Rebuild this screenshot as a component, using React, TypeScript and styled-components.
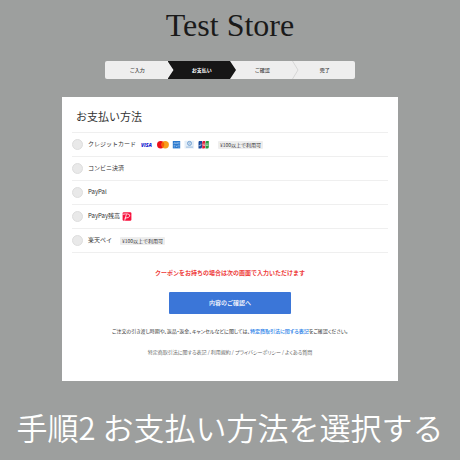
import React, { useState } from "react";
import styled, { createGlobalStyle, css } from "styled-components";

const GlobalStyle = createGlobalStyle`
  *, *::before, *::after { box-sizing: border-box; }
  body {
    margin: 0;
    background: #9d9f9e;
    color: #333;
    font-family: "Noto Sans CJK JP", "Noto Sans", sans-serif;
  }
`;

const Page = styled.div`
  display: flex;
  flex-direction: column;
  min-height: 100vh;
`;

const StoreName = styled.h1`
  margin: 5px 0 0;
  font: 400 32px/40px "Liberation Serif", serif;
  text-align: center;
  color: #1a1a1a;
`;

const Steps = styled.ol`
  display: grid;
  grid-template-columns: repeat(4, 1fr);
  margin: 16px 105px 0;
  padding: 0;
  list-style: none;
  border-radius: 2px;
  background: #eee;
  overflow: hidden;
`;

const Step = styled.li<{ $active?: boolean }>`
  display: flex;
  align-items: center;
  justify-content: center;
  position: relative;
  height: 18px;
  padding-bottom: 1px;
  padding-left: 2px;
  font-size: 5px;
  font-weight: 500;
  color: #444;
  ${(p) =>
    p.$active &&
    css`
      z-index: 1;
      margin-right: -6px;
      padding-left: 0;
      background: #161616;
      color: #fff;
      font-weight: 700;
      clip-path: polygon(0 0, calc(100% - 6px) 0, 100% 50%, calc(100% - 6px) 100%, 0 100%, 6px 50%);
    `}
`;

const Chevron = styled.svg`
  position: absolute;
  top: 0;
  right: -6px;
`;

const Card = styled.main`
  margin: 18px 62px 0;
  padding: 10px 10px 24px;
  background: #fff;
`;

const Heading = styled.h2`
  margin: 0 0 7px;
  padding-left: 4px;
  font-size: 11px;
  line-height: 18px;
  font-weight: 400;
`;

const Methods = styled.ul`
  margin: 0;
  padding: 0;
  list-style: none;
  border-top: 1px solid #efefef;
`;

const Method = styled.li`
  display: flex;
  align-items: center;
  height: 24px;
  border-bottom: 1px solid #efefef;
`;

const MethodLabel = styled.label`
  display: flex;
  align-items: center;
  font-size: 6px;
  line-height: 10px;
  cursor: pointer;
`;

const MethodName = styled.span`
  padding-bottom: 1px;
`;

const Radio = styled.input`
  appearance: none;
  flex: none;
  width: 11px;
  height: 11px;
  margin: 0 5px 0 0;
  border: 1px solid #dedede;
  border-radius: 50%;
  background: #e9e9e9;
  &:checked {
    border: 3px solid #3b76d8;
    background: #fff;
  }
`;

const Brands = styled.span`
  display: flex;
  align-items: center;
  margin-left: 4px;
`;

const Badge = styled.span`
  margin-left: 8px;
  padding: 0 2px;
  border-radius: 1px;
  background: #eee;
  font-size: 5px;
  line-height: 8px;
`;

const PayPayMark = styled.svg`
  margin-left: 2px;
`;

const Coupon = styled.p`
  margin: 15px 0 0;
  font-size: 6px;
  line-height: 10px;
  font-weight: 700;
  text-align: center;
  color: #ee3b3b;
`;

const Submit = styled.button`
  display: block;
  width: 122px;
  height: 22px;
  margin: 14px auto 0;
  padding: 0 0 1px;
  border: 0;
  border-radius: 1px;
  background: #3b76d8;
  color: #fff;
  font: 500 6px/10px "Noto Sans CJK JP", sans-serif;
  cursor: pointer;
`;

const Note = styled.p`
  margin: 12px 0 0;
  font-size: 5px;
  line-height: 10px;
  font-feature-settings: "palt";
  text-align: center;
`;

const NoteLink = styled.a`
  color: #1f80e8;
  font-weight: 500;
  text-decoration: none;
`;

const Legal = styled.nav`
  margin-top: 11px;
  font-size: 5px;
  line-height: 10px;
  font-feature-settings: "palt";
  text-align: center;
  color: #666;
`;

const LegalLink = styled.a`
  color: inherit;
  text-decoration: none;
`;

const Caption = styled.p`
  margin: 24px 0 0;
  font-size: 31px;
  line-height: 44px;
  font-weight: 350;
  text-align: center;
  color: #fff;
`;

const CardBrands = () => (
  <Brands>
    <svg width="70" height="9" viewBox="0 0 70 9" role="img" aria-label="VISA, Mastercard, American Express, Diners Club, JCB">
      <text x="1" y="7" fontFamily="Open Sans, sans-serif" fontSize="5" fontWeight="800" fontStyle="italic" fill="#1a1fd0">VISA</text>
      <circle cx="20.7" cy="4.7" r="3.7" fill="#eb101b" />
      <circle cx="25.2" cy="4.7" r="3.7" fill="#f79e1b" />
      <path d="M22.95 1.8a3.7 3.7 0 0 1 0 5.8a3.7 3.7 0 0 1 0-5.8z" fill="#fb5f00" />
      <rect x="32.8" y="1" width="7.4" height="7.4" fill="#2878ce" />
      <path d="M33.8 4l.8-1.5.8 1.5M36 4V2.5l.7.8.7-.8V4M38.2 2.5h1.4M38.2 3.8h1.4M33.6 5.4H35M33.6 6.9H35M35.8 5.4l1.6 1.6M37.4 5.4L35.8 7M38.2 5.4h1.4M38.2 7h1.4" fill="none" stroke="#cfe2f6" strokeWidth=".5" />
      <rect x="44.5" y=".8" width="9.6" height="7.8" rx=".5" fill="#e3edf7" />
      <circle cx="49.5" cy="3.4" r="2" fill="#fff" stroke="#3e7fc0" strokeWidth=".7" />
      <path d="M49 2.2v2.4M50 2.2v2.4" stroke="#3e7fc0" strokeWidth=".5" />
      <path d="M46 7.1h7" stroke="#8db2d8" strokeWidth=".8" />
      <path d="M59.3 1H62v6a1.5 1.5 0 0 1-1.5 1.5h-2V2.4A1.4 1.4 0 0 1 59.3 1z" fill="#174a9c" />
      <path d="M63.2 1h2v6a1.5 1.5 0 0 1-1.5 1.5h-1.5V2.4A1.4 1.4 0 0 1 63.2 1z" fill="#dc1f3c" />
      <path d="M67 1h1.8v6a1.5 1.5 0 0 1-1.5 1.5h-1.8V2.4A1.4 1.4 0 0 1 67 1z" fill="#259b3e" />
      <path d="M60.9 3.7v1.2q0 .8-.8.8h-1.5M65 4.1h-1.3q-.8 0-.8.7t.8.7H65M65.8 4h2.6M65.8 5.4h2.6" fill="none" stroke="#fff" strokeWidth=".6" />
    </svg>
  </Brands>
);

const PayPayIcon = () => (
  <PayPayMark width="10" height="9" viewBox="0 0 10 9" role="img" aria-label="PayPay">
    <rect x=".6" y=".2" width="8.8" height="8.5" rx="1.2" fill="#f8103c" />
    <path d="M.6 2.3Q3.5 1.7 5.8 2Q8.2 2.4 7.8 4.1Q7.2 6 2.6 6.2M4.4 2.4L2.7 8.6" fill="none" stroke="#fff" strokeWidth=".8" />
  </PayPayMark>
);

const methods = [
  { id: "card", name: "クレジットカード", icon: <CardBrands />, badge: true },
  { id: "konbini", name: "コンビニ決済" },
  { id: "paypal", name: "PayPal" },
  { id: "paypay", name: "PayPay残高", icon: <PayPayIcon /> },
  { id: "rakuten", name: "楽天ペイ", badge: true },
];

const legalPages = ["特定商取引法に関する表記", "利用規約", "プライバシーポリシー", "よくある質問"];

export default function App() {
  const [method, setMethod] = useState("");
  return (
    <Page lang="ja">
      <GlobalStyle />
      <StoreName>Test Store</StoreName>
      <Steps>
        <Step>ご入力</Step>
        <Step $active aria-current="step">お支払い</Step>
        <Step>
          ご確認
          <Chevron width="7" height="18" viewBox="0 0 7 18" aria-hidden="true">
            <path d="M.5 0L6 9L.5 18" fill="none" stroke="#d6d6d6" />
          </Chevron>
        </Step>
        <Step>完了</Step>
      </Steps>
      <Card>
        <Heading>お支払い方法</Heading>
        <Methods>
          {methods.map((m) => (
            <Method key={m.id}>
              <MethodLabel htmlFor={m.id}>
                <Radio
                  type="radio"
                  name="method"
                  id={m.id}
                  checked={method === m.id}
                  onChange={() => setMethod(m.id)}
                />
                <MethodName>{m.name}</MethodName>
                {m.icon}
                {m.badge && <Badge>¥100以上で利用可</Badge>}
              </MethodLabel>
            </Method>
          ))}
        </Methods>
        <Coupon>クーポンをお持ちの場合は次の画面で入力いただけます</Coupon>
        <Submit type="button">内容のご確認へ</Submit>
        <Note>
          ご注文の引き渡し時期や、返品・返金、キャンセルなどに関しては、
          <NoteLink href="#law">特定商取引法に関する表記</NoteLink>をご確認ください。
        </Note>
        <Legal>
          {legalPages.map((page, i) => (
            <React.Fragment key={page}>
              {i > 0 && " / "}
              <LegalLink href={`#page-${i}`}>{page}</LegalLink>
            </React.Fragment>
          ))}
        </Legal>
      </Card>
      <Caption>手順2 お支払い方法を選択する</Caption>
    </Page>
  );
}
